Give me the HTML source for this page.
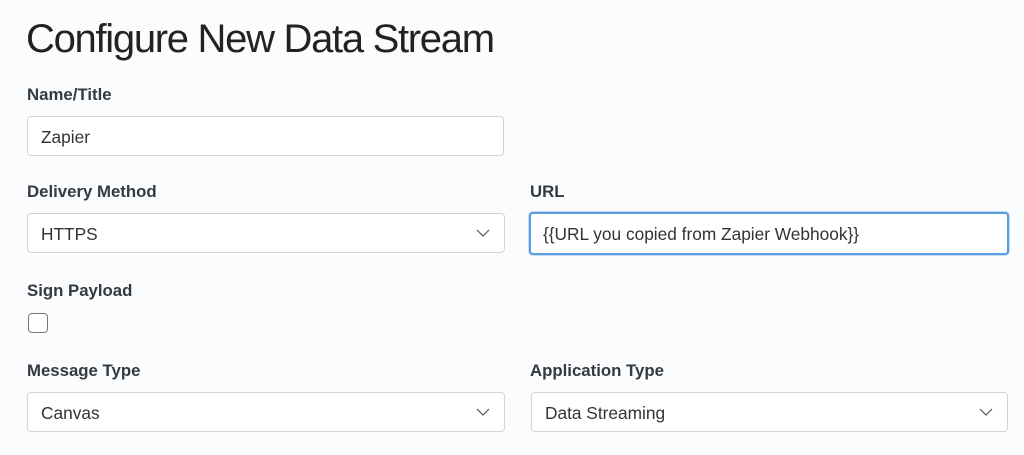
<!DOCTYPE html>
<html><head><style>
body{margin:0;width:1024px;height:455px;background:#fbfcfd;font-family:"Liberation Sans",sans-serif;position:relative;overflow:hidden;color:#343a40}
.a{position:absolute}
h1{position:absolute;left:26px;top:13px;margin:0;font-size:40px;font-weight:300;color:#222;letter-spacing:-1.3px;line-height:52px}
.l{position:absolute;font-weight:bold;font-size:16.8px;color:#343a40;line-height:20px}
.i{position:absolute;box-sizing:border-box;height:40px;background:#fff;border:1px solid #ced4da;border-radius:4px;font-size:17.3px;color:#333;padding-left:13px;line-height:40px}
.c{position:absolute;right:14px;top:14px}
</style></head><body>
<h1>Configure New Data Stream</h1>
<div class="l" style="left:27px;top:85px">Name/Title</div>
<div class="i" style="left:27px;top:116px;width:477px">Zapier</div>
<div class="l" style="left:27px;top:182px">Delivery Method</div>
<div class="i" style="left:27px;top:213px;width:478px">HTTPS<svg class="c" width="14" height="10" viewBox="0 0 14 10"><path d="M1 2l6 6 6-6" fill="none" stroke="#555" stroke-width="1.2"/></svg></div>
<div class="l" style="left:530px;top:182px">URL</div>
<div class="i" style="left:529px;top:212px;width:480px;height:43px;border:2px solid #5b9be0;box-shadow:0 0 0 1px #c5dcf5;padding-left:12px;line-height:41px">{{URL you copied from Zapier Webhook}}</div>
<div class="l" style="left:27px;top:281px">Sign Payload</div>
<div class="a" style="left:28px;top:313px;width:20px;height:20px;box-sizing:border-box;border:1px solid #777;border-radius:4px;background:#fff"></div>
<div class="l" style="left:27px;top:361px">Message Type</div>
<div class="i" style="left:27px;top:392px;width:478px">Canvas<svg class="c" width="14" height="10" viewBox="0 0 14 10"><path d="M1 2l6 6 6-6" fill="none" stroke="#555" stroke-width="1.2"/></svg></div>
<div class="l" style="left:530px;top:361px">Application Type</div>
<div class="i" style="left:531px;top:392px;width:477px">Data Streaming<svg class="c" width="14" height="10" viewBox="0 0 14 10"><path d="M1 2l6 6 6-6" fill="none" stroke="#555" stroke-width="1.2"/></svg></div>
</body></html>
